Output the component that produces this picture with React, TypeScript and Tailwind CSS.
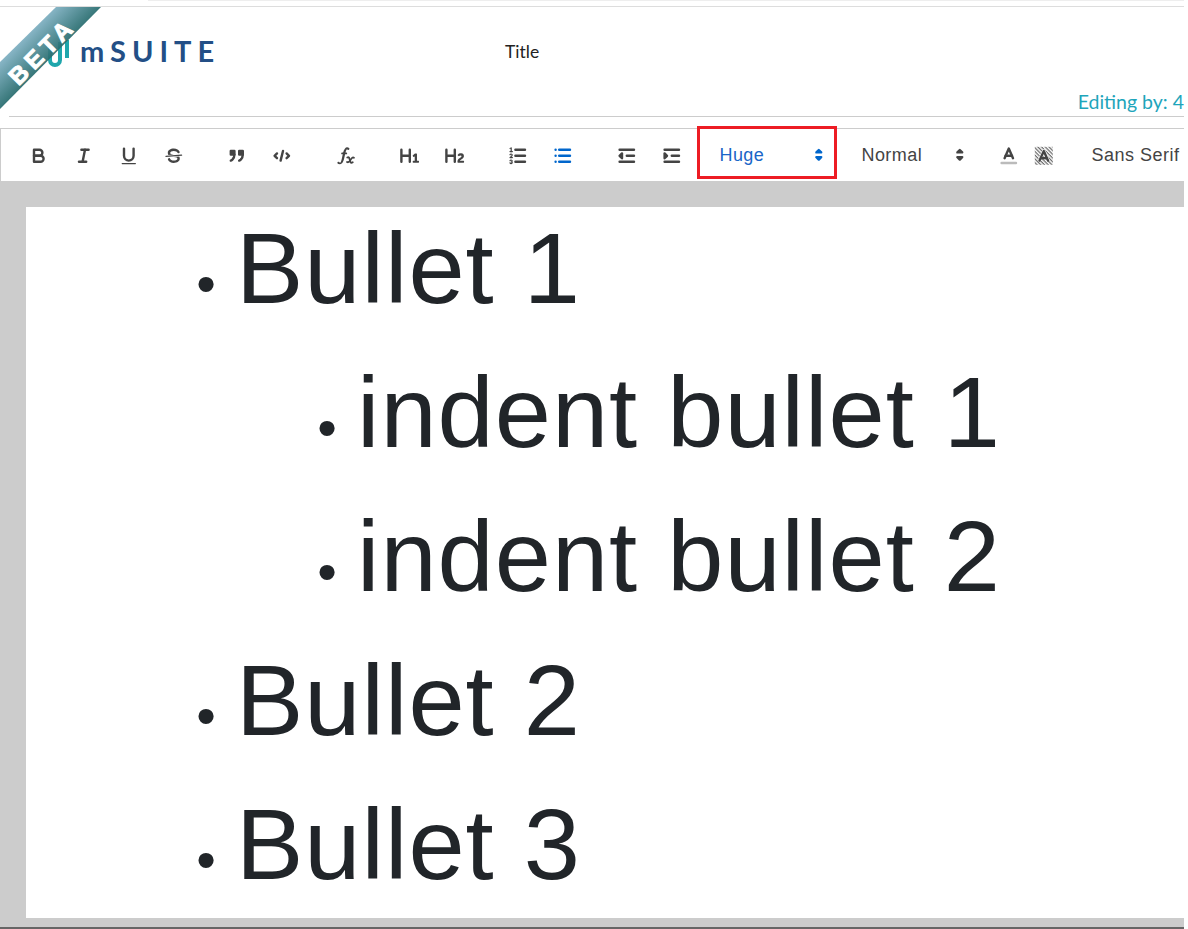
import type { ReactNode } from "react";

function Tool({ children, active }: { children: ReactNode; active?: boolean }) {
  return (
    <button
      className={`flex h-[52px] w-[45px] shrink-0 items-center justify-center pt-[2px] ${
        active ? "text-[#06c]" : "text-[#444]"
      }`}
    >
      <svg
        viewBox="0 0 18 18"
        className="h-[21.6px] w-[21.6px]"
        fill="none"
        stroke="currentColor"
        strokeWidth="2"
        strokeLinecap="round"
        strokeLinejoin="round"
      >
        {children}
      </svg>
    </button>
  );
}

function Arrows({ className }: { className: string }) {
  return (
    <svg viewBox="0 0 18 18" className={`h-[21.6px] w-[21.6px] ${className}`} fill="currentColor" stroke="currentColor" strokeWidth="2" strokeLinejoin="round">
      <polygon points="7 11 9 13 11 11 7 11" />
      <polygon points="7 7 9 5 11 7 7 7" />
    </svg>
  );
}

const rows = [
  { text: "Bullet 1", indent: false },
  { text: "indent bullet 1", indent: true },
  { text: "indent bullet 2", indent: true },
  { text: "Bullet 2", indent: false },
  { text: "Bullet 3", indent: false },
];

export default function App() {
  return (
    <div className="relative flex h-[929px] w-[1184px] flex-col overflow-hidden bg-white font-['Liberation_Sans',sans-serif]">
      {/* top strip */}
      <div className="flex h-[6px] justify-end">
        <div className="h-px w-[1036px] bg-[#eeeeee]" />
      </div>

      {/* header */}
      <header className="h-[110px] border-t border-[#dddddd]">
        <div className="flex h-[84px] items-start">
          <div className="mt-[28px] flex h-[32px] w-[505px] items-end pl-[47px]">
            <svg viewBox="0 0 24 28" className="mb-[-1px] h-[28px] w-[24px]" fill="none" stroke="#1fa6ac" strokeWidth="4">
              <path d="M3 8v12a5 5 0 0 0 10 0V2" />
              <path d="M20 0v18" />
            </svg>
            <span className="ml-[9px] font-['Lato',sans-serif] text-[29px] font-bold leading-[32px] tracking-[6px] text-[#234f86]">
              mSUITE
            </span>
          </div>
          <span className="mt-[34px] font-['Lato',sans-serif] text-[17.5px] leading-[22px] text-[#222]">Title</span>
        </div>
        <div className="flex justify-end">
          <span className="whitespace-nowrap font-['Lato',sans-serif] text-[19.5px] leading-[22px] text-[#1ea5bb]">
            Editing by: 4
          </span>
        </div>
      </header>

      <div className="ml-[9px] h-px bg-[#cccccc]" />
      <div className="h-[11px]" />

      {/* toolbar */}
      <div className="flex h-[53px] items-center border-t border-l border-[#cccccc] pl-[15px] whitespace-nowrap">
        <div className="flex gap-[18.7px]">
          <div className="flex">
            <Tool>
              <path d="M5,4H9.5A2.5,2.5,0,0,1,12,6.5v0A2.5,2.5,0,0,1,9.5,9H5A0,0,0,0,1,5,9V4A0,0,0,0,1,5,4Z" />
              <path d="M5,9h5.5A2.5,2.5,0,0,1,13,11.5v0A2.5,2.5,0,0,1,10.5,14H5a0,0,0,0,1,0,0V9A0,0,0,0,1,5,9Z" />
            </Tool>
            <Tool>
              <line x1="7" x2="13" y1="4" y2="4" />
              <line x1="5" x2="11" y1="14" y2="14" />
              <line x1="8" x2="10" y1="14" y2="4" />
            </Tool>
            <Tool>
              <path d="M5,3V9a4.006,4.006,0,0,0,4,4H9a4.006,4.006,0,0,0,4-4V3" />
              <rect x="3" y="15" width="12" height="1" rx=".5" fill="currentColor" stroke="none" />
            </Tool>
            <Tool>
              <line x1="15.5" x2="2.5" y1="8.5" y2="9.5" strokeWidth="1" />
              <path fill="currentColor" stroke="none" d="M9.007,8C6.542,7.791,6,7.519,6,6.5,6,5.792,7.283,5,9,5c1.571,0,2.765.679,2.969,1.309a1,1,0,0,0,1.9-.617C13.356,4.106,11.354,3,9,3,6.2,3,4,4.538,4,6.5a3.2,3.2,0,0,0,.5,1.843Z" />
              <path fill="currentColor" stroke="none" d="M8.984,10C11.457,10.208,12,10.479,12,11.5c0,.708-1.283,1.5-3,1.5-1.571,0-2.765-.679-2.969-1.309a1,1,0,1,0-1.9.617C4.644,13.894,6.646,15,9,15c2.8,0,5-1.538,5-3.5a3.2,3.2,0,0,0-.5-1.843Z" />
            </Tool>
          </div>
          <div className="flex">
            <Tool>
              <rect x="4" y="5" width="3" height="3" fill="currentColor" />
              <rect x="11" y="5" width="3" height="3" fill="currentColor" />
              <path d="M7,8c0,4.031-3,5-3,5" fill="currentColor" />
              <path d="M14,8c0,4.031-3,5-3,5" fill="currentColor" />
            </Tool>
            <Tool>
              <polyline points="5 7 3 9 5 11" />
              <polyline points="13 7 15 9 13 11" />
              <line x1="10" x2="8" y1="5" y2="13" />
            </Tool>
          </div>
          <div className="flex">
            <Tool>
              <path fill="currentColor" stroke="none" d="M11.759,2.482a2.561,2.561,0,0,0-3.53.607A7.656,7.656,0,0,0,6.8,6.2C6.109,9.188,5.275,14.677,4.15,14.927a1.545,1.545,0,0,0-1.3-.933A0.922,0.922,0,0,0,2,15.036S1.954,16,4.119,16s3.091-2.691,3.7-5.553c0.177-.826.36-1.726,0.554-2.6L8.775,6.2c0.381-1.421.807-2.521,1.306-2.676a1.014,1.014,0,0,0,1.02.56A0.966,0.966,0,0,0,11.759,2.482Z" />
              <rect x="5.15" y="6.2" width="5" height="1.6" rx="0.8" fill="currentColor" stroke="none" />
              <path d="M10.2 10.400c1-.4 1.500-.2 1.800.8l.9 3c.2.800.8 1 1.900.2" strokeWidth="1.5" />
              <path d="M15.800 10.600c-1.100-.7-1.900.3-3.100 2.200-.9 1.500-1.500 2-2.700 1.400" strokeWidth="1.5" />
            </Tool>
          </div>
          <div className="flex">
            <Tool>
              <path fill="currentColor" stroke="none" d="M10,4V14a1,1,0,0,1-2,0V10H3v4a1,1,0,0,1-2,0V4A1,1,0,0,1,3,4V8H8V4a1,1,0,0,1,2,0Zm6.06787,9.209H14.98975V7.59863a.54085.54085,0,0,0-.605-.60547h-.62744a1.01119,1.01119,0,0,0-.748.29688L11.645,8.56641a.5435.5435,0,0,0-.022.8584l.28613.30762a.53861.53861,0,0,0,.84717.0332l.09912-.08789a1.2137,1.2137,0,0,0,.2417-.35254h.02246s-.01123.30859-.01123.60547V13.209H12.041a.54085.54085,0,0,0-.605.60547v.43945a.54085.54085,0,0,0,.605.60547h4.02686a.54085.54085,0,0,0,.605-.60547v-.43945A.54085.54085,0,0,0,16.06787,13.209Z" />
            </Tool>
            <Tool>
              <path fill="currentColor" stroke="none" d="M16.73975,13.81445v.43945a.54085.54085,0,0,1-.605.60547H11.855a.58392.58392,0,0,1-.64893-.60547V14.0127c0-2.90527,3.39941-3.42187,3.39941-4.55469a.77675.77675,0,0,0-.84717-.78125,1.17684,1.17684,0,0,0-.83594.38477c-.2749.26367-.561.374-.85791.13184l-.4292-.34082c-.30811-.24219-.38525-.51758-.1543-.81445a2.97155,2.97155,0,0,1,2.45361-1.17676,2.45393,2.45393,0,0,1,2.68408,2.40918c0,2.45312-3.1792,2.92676-3.27832,3.93848h2.79443A.54085.54085,0,0,1,16.73975,13.81445ZM9,3A.99974.99974,0,0,0,8,4V8H3V4A1,1,0,0,0,1,4V14a1,1,0,0,0,2,0V10H8v4a1,1,0,0,0,2,0V4A.99974.99974,0,0,0,9,3Z" />
            </Tool>
          </div>
          <div className="flex">
            <Tool>
              <line x1="7" x2="15" y1="4" y2="4" />
              <line x1="7" x2="15" y1="9" y2="9" />
              <line x1="7" x2="15" y1="14" y2="14" />
              <line x1="2.5" x2="4.5" y1="5.5" y2="5.5" strokeWidth="1" />
              <path fill="currentColor" stroke="none" d="M3.5,6A0.5,0.5,0,0,1,3,5.5V3.085l-0.276.138A0.5,0.5,0,0,1,2.053,3c-0.124-.247-0.023-0.324.224-0.447l1-.5A0.5,0.5,0,0,1,4,2.5v3A0.5,0.5,0,0,1,3.5,6Z" />
              <path strokeWidth="1" d="M4.5,10.5h-2c0-.234,1.85-1.076,1.85-2.234A0.959,0.959,0,0,0,2.5,8.156" />
              <path strokeWidth="1" d="M2.5,14.846a0.959,0.959,0,0,0,1.85-.109A0.7,0.7,0,0,0,3.75,14a0.688,0.688,0,0,0,.6-0.736,0.959,0.959,0,0,0-1.85-.109" />
            </Tool>
            <Tool active>
              <line x1="6" x2="15" y1="4" y2="4" />
              <line x1="6" x2="15" y1="9" y2="9" />
              <line x1="6" x2="15" y1="14" y2="14" />
              <line x1="3" x2="3" y1="4" y2="4" />
              <line x1="3" x2="3" y1="9" y2="9" />
              <line x1="3" x2="3" y1="14" y2="14" />
            </Tool>
          </div>
          <div className="flex">
            <Tool>
              <line x1="3" x2="15" y1="14" y2="14" />
              <line x1="3" x2="15" y1="4" y2="4" />
              <line x1="9" x2="15" y1="9" y2="9" />
              <polyline points="5 7 5 11 3 9 5 7" fill="currentColor" />
            </Tool>
            <Tool>
              <line x1="3" x2="15" y1="14" y2="14" />
              <line x1="3" x2="15" y1="4" y2="4" />
              <line x1="9" x2="15" y1="9" y2="9" />
              <polyline points="3 7 3 11 5 9 3 7" fill="currentColor" />
            </Tool>
          </div>
        </div>

        {/* size picker, the red box is an annotation over the toolbar */}
        <div className="relative ml-[2.5px] flex h-[52px] w-[140px] shrink-0 items-center justify-between pr-[7px] pl-[22.5px] text-[#1a66c8]">
          <span className="text-[18px] leading-[22px] tracking-[0.45px]">Huge</span>
          <Arrows className="text-[#06c]" />
          <div className="absolute top-[-3px] right-0 bottom-[2px] left-0 border-[3px] border-[#ed1c24]" />
        </div>

        {/* header picker */}
        <div className="flex h-[52px] w-[144.5px] shrink-0 items-center justify-between pr-[11px] pl-[24.5px] text-[#444]">
          <span className="text-[18px] leading-[22px] tracking-[0.45px]">Normal</span>
          <Arrows className="text-[#444]" />
        </div>

        <div className="ml-[4px] flex shrink-0 items-center gap-[13.4px] pt-[2px] pl-[12.5px]">
          <svg viewBox="0 0 18 18" className="h-[21.6px] w-[21.6px] text-[#444]" fill="none" stroke="currentColor" strokeWidth="2" strokeLinecap="round" strokeLinejoin="round">
            <line x1="3" x2="15" y1="15" y2="15" stroke="#bbbbbb" />
            <polyline points="5.500 11 9 3 12.500 11" />
            <line x1="11.630" x2="6.380" y1="9" y2="9" />
          </svg>
          <svg viewBox="0 0 18 18" className="h-[21.6px] w-[21.6px] text-[#444]" fill="none">
            <defs>
              <pattern id="hatch" width="2.2" height="2.2" patternUnits="userSpaceOnUse" patternTransform="rotate(45)">
                <rect width="2.2" height="1" fill="#666666" />
              </pattern>
            </defs>
            <rect x="1.5" y="1.500" width="15" height="15" fill="url(#hatch)" />
            <polyline points="5.500 13 9 5 12.500 13" stroke="#ffffff" strokeWidth="3" strokeLinejoin="round" />
            <polyline points="5.500 13 9 5 12.500 13" stroke="currentColor" strokeWidth="2" strokeLinecap="round" strokeLinejoin="round" />
            <line x1="11.630" x2="6.380" y1="11" y2="11" stroke="currentColor" strokeWidth="2" />
          </svg>
        </div>

        <span className="ml-[37px] text-[18px] leading-[22px] tracking-[0.5px] text-[#444]">Sans Serif</span>
      </div>

      {/* editor */}
      <div className="flex min-h-0 flex-1 flex-col bg-[#cccccc] pt-[26px] pb-[9px] pl-[26px]">
        <div className="flex-1 overflow-hidden bg-white">
          <ul className="mt-[-11px] text-[#212529]">
            {rows.map((r) => (
              <li
                key={r.text}
                className={`flex h-[144px] items-baseline whitespace-nowrap ${r.indent ? "pl-[271px]" : "pl-[150px]"}`}
              >
                <span className="w-[60px] text-center text-[56px]">•</span>
                <span className="text-[101px] leading-[144px] tracking-[1px]">{r.text}</span>
              </li>
            ))}
          </ul>
        </div>
      </div>
      <div className="h-[2px] shrink-0 bg-[#666666]" />

      {/* beta ribbon */}
      <svg className="absolute top-0 left-0 h-[120px] w-[120px]" viewBox="0 0 120 120">
        <defs>
          <linearGradient id="ribbon" x1="28" y1="34" x2="52" y2="58" gradientUnits="userSpaceOnUse">
            <stop offset="0" stopColor="#7fb0c2" />
            <stop offset="1" stopColor="#256a6c" />
          </linearGradient>
        </defs>
        <polygon points="0,62 56,7 101,7 0,109" fill="url(#ribbon)" opacity="0.93" />
        <text
          x="41"
          y="60"
          transform="rotate(-45 41 50)"
          textAnchor="middle"
          fill="#ffffff"
          stroke="#ffffff"
          strokeWidth="1"
          fontFamily="Liberation Sans"
          fontWeight="700"
          fontSize="24"
          letterSpacing="5"
        >
          BETA
        </text>
      </svg>
    </div>
  );
}
